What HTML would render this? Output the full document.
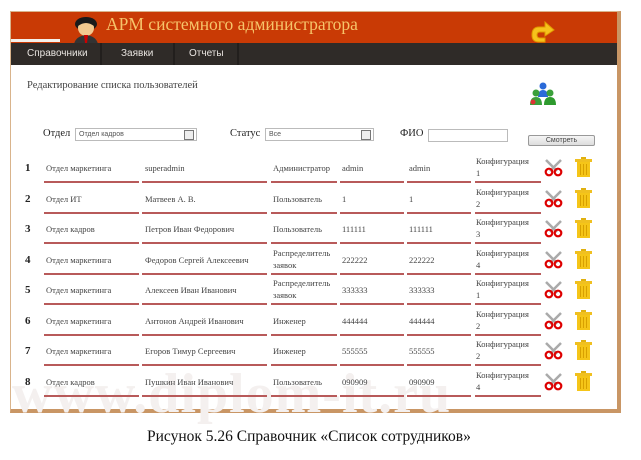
<!DOCTYPE html>
<html><head><meta charset="utf-8"><style>
body{margin:0;width:641px;height:460px;background:#fff;position:relative;overflow:hidden;font-family:"Liberation Serif",serif}
.a{position:absolute}
.frame{left:10px;top:11px;width:606px;height:397px;border:1px solid #d9b48c;border-right:4px solid #c99665;border-bottom:4px solid #c99665;background:#fff}
.hdr{left:11px;top:12px;width:606px;height:31px;background:#c93a05}
.nav{left:11px;top:43px;width:606px;height:22px;background:#2f2b28}
.nav span{position:absolute;top:5px;font:10px "Liberation Sans",sans-serif;color:#e8e4e0}
.t{font-size:8.5px;color:#444}
.ln{height:2px;background:#b85a5a;top:0}
.num{font-weight:bold;font-size:11px;color:#222}
.sel{background:#fff;border:1px solid #bbb;height:11px;font:7px "Liberation Sans",sans-serif;color:#555;padding-left:3px;line-height:11px}
.sel i{position:absolute;right:2px;top:1px;width:8px;height:8px;border:1px solid #777;background:#eee}
</style></head><body>
<div class="a frame"></div>
<div class="a" style="left:12px;top:362px;font-size:56px;color:#f4f0ef;letter-spacing:1px;font-weight:bold;white-space:nowrap">www.diplom-it.ru</div>
<div class="a hdr"></div>
<div class="a" style="left:11px;top:39px;width:49px;height:3px;background:#f4f0ea"></div>
<svg class="a" style="left:70px;top:15px" width="32" height="29" viewBox="0 0 32 29">
<ellipse cx="16" cy="9" rx="11" ry="7" fill="#1a1a1a"/>
<ellipse cx="16" cy="13" rx="8" ry="8" fill="#f3c98f"/>
<path d="M7 8 Q16 -2 25 8 L24 11 Q16 5 8 11Z" fill="#1a1a1a"/>
<path d="M4 29 Q6 21 16 20 Q26 21 28 29Z" fill="#333"/>
<path d="M14 20 L18 20 L17 28 L15 28Z" fill="#c00"/>
</svg>
<div class="a" style="left:106px;top:14px;font-size:17.5px;color:#f6c46a">АРМ системного администратора</div>
<svg class="a" style="left:531px;top:21px" width="24" height="22" viewBox="0 0 24 22">
<path d="M14 1 L23 9 L14 15 L14 11 L9 11 Q6 11 6 14 Q6 17 9 17 L14 17 L14 21 L8 21 Q1 21 1 14 Q1 6 8 6 L14 6Z" fill="#f6c21c" stroke="#e09a00" stroke-width="1"/>
</svg>
<div class="a nav">
<span style="left:16px">Справочники</span>
<span style="left:110px">Заявки</span>
<span style="left:178px">Отчеты</span>
<div class="a" style="left:89px;top:0;width:2px;height:22px;background:#221f1d"></div>
<div class="a" style="left:162px;top:0;width:2px;height:22px;background:#221f1d"></div>
<div class="a" style="left:226px;top:0;width:2px;height:22px;background:#221f1d"></div>
</div>
<div class="a" style="left:27px;top:80px;font-size:10.5px;color:#444">Редактирование списка пользователей</div>
<svg class="a" style="left:529px;top:81px" width="28" height="26" viewBox="0 0 28 26">
<circle cx="14" cy="5" r="3.5" fill="#2a6ad8"/><path d="M9 16 Q9 9 14 9 Q19 9 19 16Z" fill="#2a6ad8"/>
<circle cx="7" cy="12" r="3.5" fill="#3aa03a"/><path d="M1 24 Q1 16 7 16 Q13 16 13 24Z" fill="#3aa03a"/>
<circle cx="21" cy="12" r="3.5" fill="#3aa03a"/><path d="M15 24 Q15 16 21 16 Q27 16 27 24Z" fill="#2e9a2e"/>
<circle cx="4" cy="21" r="2.5" fill="#d33"/>
</svg>
<div class="a" style="left:43px;top:128px;font-size:10.5px;color:#222">Отдел</div>
<div class="a sel" style="left:75px;top:128px;width:117px">Отдел кадров<i></i></div>
<div class="a" style="left:230px;top:128px;font-size:10.5px;color:#222">Статус</div>
<div class="a sel" style="left:265px;top:128px;width:104px">Все<i></i></div>
<div class="a" style="left:400px;top:128px;font-size:10.5px;color:#222">ФИО</div>
<div class="a" style="left:428px;top:129px;width:78px;height:11px;border:1px solid #bbb"></div>
<div class="a" style="left:528px;top:135px;width:65px;height:9px;border:1px solid #999;border-radius:2px;background:linear-gradient(#f5f5f5,#ddd);font:7px 'Liberation Sans',sans-serif;color:#444;text-align:center;line-height:9px">Смотреть</div>
<div id="rows"></div>
<div class="a" style="left:147px;top:428px;font-size:15.5px;color:#111">Рисунок 5.26 Справочник «Список сотрудников»</div>
<script>
var d=[["Отдел маркетинга","superadmin","Администратор","admin","admin","1"],
["Отдел ИТ","Матвеев А. В.","Пользователь","1","1","2"],
["Отдел кадров","Петров Иван Федорович","Пользователь","111111","111111","3"],
["Отдел маркетинга","Федоров Сергей Алексеевич","Распределитель<br>заявок","222222","222222","4"],
["Отдел маркетинга","Алексеев Иван Иванович","Распределитель<br>заявок","333333","333333","1"],
["Отдел маркетинга","Антонов Андрей Иванович","Инженер","444444","444444","2"],
["Отдел маркетинга","Егоров Тимур Сергеевич","Инженер","555555","555555","2"],
["Отдел кадров","Пушкин Иван Иванович","Пользователь","090909","090909","4"]];
var xs=[46,145,273,342,409,476],ls=[[44,139],[142,267],[271,337],[340,404],[407,471],[475,541]],h="";
d.forEach(function(r,i){var y=153+i*30.5;
h+='<div class="a num" style="left:25px;top:'+(y+9)+'px">'+(i+1)+'</div>';
for(var j=0;j<5;j++){var two=r[j].indexOf("<br>")>0;h+='<div class="a t" style="left:'+xs[j]+'px;top:'+(two?y+2:y+9)+'px;line-height:12px">'+r[j]+'</div>';}
h+='<div class="a t" style="left:476px;top:'+(y+2)+'px;line-height:12px">Конфигурация<br>'+r[5]+'</div>';
ls.forEach(function(l){h+='<div class="a ln" style="left:'+l[0]+'px;width:'+(l[1]-l[0])+'px;top:'+(y+28)+'px"></div>'});
h+='<svg class="a" style="left:543px;top:'+(y+6)+'px" width="21" height="18" viewBox="0 0 21 18"><path d="M3 1 L14 12 M18 1 L7 12" stroke="#aaa" stroke-width="2.5"/><circle cx="6" cy="13" r="3.3" fill="none" stroke="#d00" stroke-width="2.2"/><circle cx="15" cy="13" r="3.3" fill="none" stroke="#d00" stroke-width="2.2"/></svg>';
h+='<svg class="a" style="left:574px;top:'+(y+4)+'px" width="19" height="20" viewBox="0 0 19 20"><rect x="1" y="2" width="17" height="3" fill="#f0c020"/><rect x="7" y="0" width="5" height="2" fill="#e0b010"/><rect x="3" y="5" width="13" height="15" fill="#f5c518"/><path d="M6.5 7 V18 M9.5 7 V18 M12.5 7 V18" stroke="#d8a000" stroke-width="1"/></svg>';
});
document.getElementById("rows").innerHTML=h;
</script>
</body></html>
